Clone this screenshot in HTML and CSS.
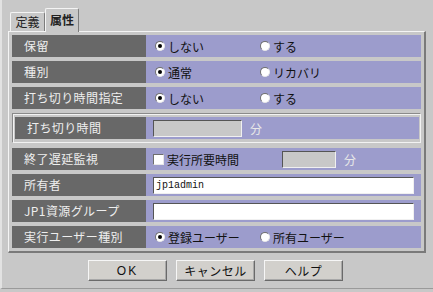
FILE: index.html
```html
<!DOCTYPE html>
<html>
	<head>
		<meta charset="UTF-8">
		<title>属性</title>
		<link rel="stylesheet" href="styles.css">
	</head>
	<body>
		<div class="win">
			<div class="tabs">
				<div class="tab">定義</div>
				<div class="tab on">属性</div>
			</div>
			<div class="panel">
				<div class="row">
					<div class="lbl">保留</div>
					<div class="val">
						<span class="opt"><i class="radio on"></i>しない</span>
						<span class="opt"><i class="radio"></i>する</span>
					</div>
				</div>
				<div class="row">
					<div class="lbl">種別</div>
					<div class="val">
						<span class="opt"><i class="radio on"></i>通常</span>
						<span class="opt"><i class="radio"></i>リカバリ</span>
					</div>
				</div>
				<div class="row sep">
					<div class="lbl">打ち切り時間指定</div>
					<div class="val">
						<span class="opt"><i class="radio on"></i>しない</span>
						<span class="opt"><i class="radio"></i>する</span>
					</div>
				</div>
				<div class="group">
					<div class="row sub">
						<div class="lbl">打ち切り時間</div>
						<div class="val">
							<span class="field off mid"></span>
							<span class="unit">分</span>
						</div>
					</div>
				</div>
				<div class="row">
					<div class="lbl">終了遅延監視</div>
					<div class="val">
						<span class="opt wide"><i class="check"></i>実行所要時間</span>
						<span class="field off small"></span>
						<span class="unit">分</span>
					</div>
				</div>
				<div class="row">
					<div class="lbl">所有者</div>
					<div class="val">
						<span class="field full">jp1admin</span>
					</div>
				</div>
				<div class="row">
					<div class="lbl">JP1資源グループ</div>
					<div class="val">
						<span class="field full"></span>
					</div>
				</div>
				<div class="row">
					<div class="lbl">実行ユーザー種別</div>
					<div class="val">
						<span class="opt"><i class="radio on"></i>登録ユーザー</span>
						<span class="opt"><i class="radio"></i>所有ユーザー</span>
					</div>
				</div>
			</div>
			<div class="btns">
				<button class="btn en">OK</button>
				<button class="btn">キャンセル</button>
				<button class="btn">ヘルプ</button>
			</div>
		</div>
	</body>
</html>
```

FILE: styles.css
```css
*{
	margin: 0;
	padding: 0;
	box-sizing: border-box;
}
body{
	width: 433px;
	height: 292px;
	background: #c8c8c8;
	font-family: "Noto Sans CJK JP", "Liberation Sans", sans-serif;
	font-size: 12px;
	overflow: hidden;
}
.win{
	height: 289px;
	border-left: 2px solid #e2e2e2;
	border-bottom: 1px solid #9a9a9a;
}
.tabs{
	display: flex;
	align-items: flex-end;
	height: 31px;
	padding-left: 8px;
}
.tab{
	width: 35px;
	height: 19px;
	line-height: 17px;
	text-align: center;
	color: #222;
	border-top: 1px solid #f4f4f4;
	border-left: 1px solid #f4f4f4;
	border-right: 1px solid #7c7c7c;
	border-radius: 2px 2px 0 0;
}
.tab.on{
	width: 34px;
	height: 24px;
	line-height: 21px;
	font-weight: bold;
	background: #c8c8c8;
	margin-bottom: -1px;
	position: relative;
	z-index: 1;
}
.panel{
	margin: 0 7px 0 6px;
	height: 222px;
	padding: 3px 3px 0 3px;
	border-top: 1px solid #f4f4f4;
	border-left: 1px solid #f4f4f4;
	border-right: 2px solid #7a7a7a;
	border-bottom: 2px solid #7a7a7a;
}
.row{
	display: flex;
	height: 22px;
	margin-bottom: 4px;
}
.row.sep{
	margin-top: 2px;
}
.lbl{
	width: 134px;
	background: #686868;
	color: #eeeeee;
	line-height: 22px;
	padding-left: 12px;
	letter-spacing: 0.4px;
}
.val{
	flex: 1;
	background: #9c9ccc;
	display: flex;
	align-items: center;
	padding-left: 9px;
	color: #111;
}
.opt{
	display: flex;
	align-items: center;
	width: 105px;
}
.opt.wide{
	width: 127px;
	padding-left: 0;
}
.radio{
	width: 10px;
	height: 10px;
	border-radius: 50%;
	background: #fff;
	border: 1px solid;
	border-color: #6e6e6e #e8e8e8 #e8e8e8 #6e6e6e;
	margin-right: 3px;
	position: relative;
}
.radio.on::after{
	content: "";
	position: absolute;
	left: 2px;
	top: 2px;
	width: 4px;
	height: 4px;
	border-radius: 50%;
	background: #000;
}
.check{
	width: 11px;
	height: 11px;
	margin-left: -2px;
	margin-right: 3px;
	background: #fff;
	border: 1px solid;
	border-color: #6e6e6e #e8e8e8 #e8e8e8 #6e6e6e;
}
.group{
	margin: 1px 0 5px 0;
	padding: 3px 1px 3px 2px;
	border: 1px solid #8a8a8a;
	border-right-color: #f2f2f2;
	border-bottom-color: #f2f2f2;
	box-shadow: inset 1px 1px 0 #f2f2f2;
}
.row.sub{
	margin-bottom: 0;
}
.row.sub .lbl{
	width: 131px;
}
.row.sub .val{
	padding-left: 7px;
}
.field{
	height: 17px;
	background: #fff;
	border: 1px solid;
	border-color: #555 #f0f0f0 #f0f0f0 #555;
	font-family: "Liberation Mono", monospace;
	font-size: 10px;
	line-height: 15px;
	padding-left: 2px;
}
.field.off{
	background: #c8c8c8;
}
.field.mid{
	width: 89px;
}
.field.small{
	width: 54px;
}
.field.full{
	width: 261px;
	margin-left: -2px;
}
.unit{
	color: #e8e8e8;
	margin-left: 8px;
}
.btns{
	display: flex;
	gap: 9px;
	padding: 7px 0 0 86px;
}
.btn{
	width: 79px;
	height: 21px;
	background: #d2d0cc;
	border: 1px solid;
	border-color: #f6f6f6 #6a6a6a #6a6a6a #f6f6f6;
	box-shadow: inset -1px -1px 0 #a8a8a8;
	font-family: "Noto Sans CJK JP", sans-serif;
	font-size: 12px;
	color: #111;
	letter-spacing: 0.5px;
}
.btn.en{
	font-family: "Liberation Sans", sans-serif;
	letter-spacing: 2px;
}
```
